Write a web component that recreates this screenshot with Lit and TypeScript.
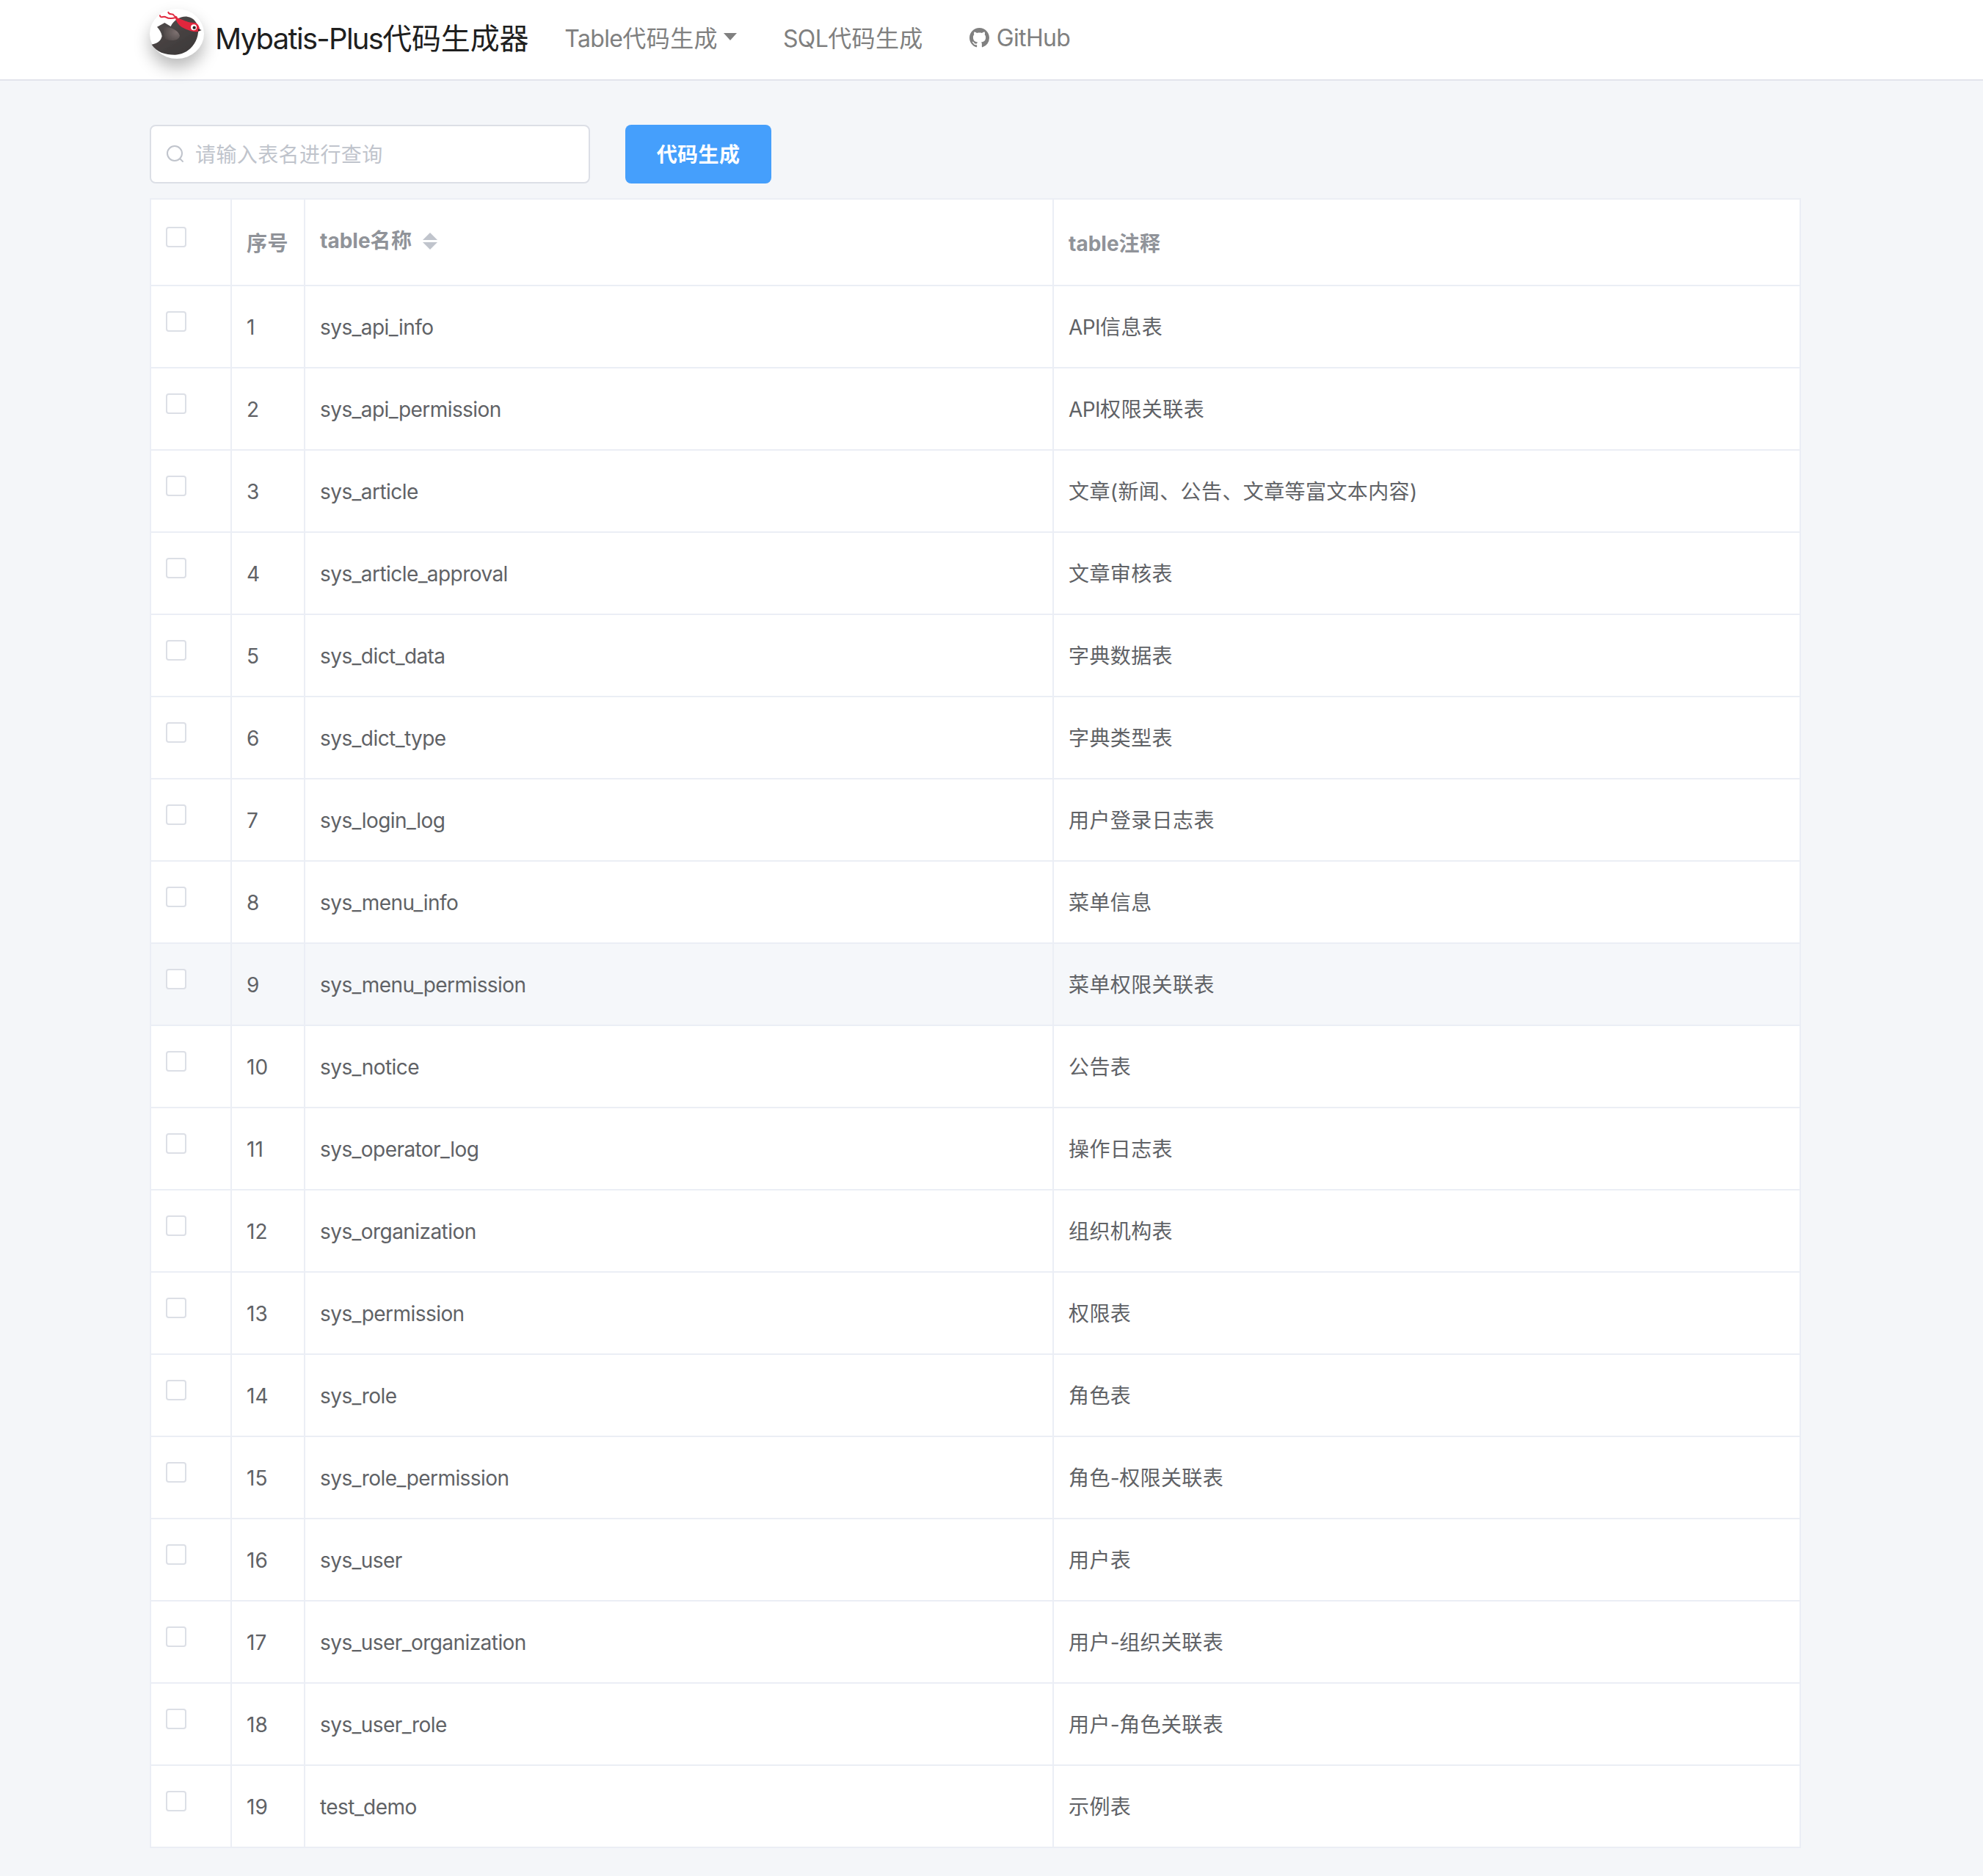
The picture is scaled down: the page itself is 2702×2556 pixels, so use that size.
import { LitElement, html, css, svg } from "lit";
import { customElement } from "lit/decorators.js";

const ROWS: [string, string][] = [
  ["sys_api_info", "API信息表"],
  ["sys_api_permission", "API权限关联表"],
  ["sys_article", "文章(新闻、公告、文章等富文本内容)"],
  ["sys_article_approval", "文章审核表"],
  ["sys_dict_data", "字典数据表"],
  ["sys_dict_type", "字典类型表"],
  ["sys_login_log", "用户登录日志表"],
  ["sys_menu_info", "菜单信息"],
  ["sys_menu_permission", "菜单权限关联表"],
  ["sys_notice", "公告表"],
  ["sys_operator_log", "操作日志表"],
  ["sys_organization", "组织机构表"],
  ["sys_permission", "权限表"],
  ["sys_role", "角色表"],
  ["sys_role_permission", "角色-权限关联表"],
  ["sys_user", "用户表"],
  ["sys_user_organization", "用户-组织关联表"],
  ["sys_user_role", "用户-角色关联表"],
  ["test_demo", "示例表"],
];

/* Latin runs are tracked tighter than CJK runs, as in the reference's system font. */
const runs = (text: string) =>
  text
    .split(/([A-Za-z_\-]+)/)
    .filter((s) => s)
    .map((s) =>
      /^[A-Za-z_\-]+$/.test(s) ? html`<span class="lat">${s}</span>` : html`<span>${s}</span>`
    );

const logo = svg`
  <svg class="logo-svg" viewBox="42 40 222 200" xmlns="http://www.w3.org/2000/svg">
    <defs>
      <linearGradient id="body" x1="0" y1="0" x2="0.7" y2="1">
        <stop offset="0" stop-color="#524c4c"/>
        <stop offset="1" stop-color="#3d3939"/>
      </linearGradient>
      <radialGradient id="wing" cx="0.8" cy="0.4" r="0.9">
        <stop offset="0" stop-color="#7d7170"/>
        <stop offset="1" stop-color="#4a4444"/>
      </radialGradient>
      <filter id="soft"><feGaussianBlur stdDeviation="1"/></filter>
    </defs>
    <g filter="url(#soft)">
      <path fill="url(#body)" d="M72 112 L103 95 L128 110 C140 85 165 68 195 70 C225 74 243 100 240 135 C235 185 195 225 145 226 C105 226 70 215 50 184 C72 180 88 170 92 150 C90 135 82 122 72 112 Z"/>
      <path fill="url(#wing)" d="M97 112 C120 108 160 125 165 148 C160 170 125 172 105 160 C100 145 100 128 97 112 Z"/>
      <path fill="#e0283c" d="M146 72 C170 80 200 96 226 95 C240 97 246 112 247 127 C232 138 200 128 172 112 C160 104 150 90 146 72 Z"/>
      <path fill="none" stroke="#e0283c" stroke-width="6" stroke-linecap="round" stroke-linejoin="round" d="M84 66 C86 78 100 66 108 72 C118 78 134 78 148 74"/>
      <path fill="none" stroke="#e0283c" stroke-width="6" stroke-linecap="round" stroke-linejoin="round" d="M118 52 C122 66 136 54 140 64 C143 70 146 70 152 72"/>
      <circle cx="222" cy="114" r="12" fill="#fff"/>
      <circle cx="224" cy="115" r="6.5" fill="#2f2b2b"/>
      <path fill="#2f2b2b" d="M240 120 L254 125 L240 130 Z"/>
    </g>
  </svg>`;

const github = svg`
  <svg class="gh" viewBox="0 0 16 16" xmlns="http://www.w3.org/2000/svg">
    <path fill="currentColor" d="M8 0C3.58 0 0 3.58 0 8c0 3.54 2.29 6.53 5.47 7.59.4.07.55-.17.55-.38 0-.19-.01-.82-.01-1.49-2.01.37-2.53-.49-2.69-.94-.09-.23-.48-.94-.82-1.13-.28-.15-.68-.52-.01-.53.63-.01 1.08.58 1.23.82.72 1.21 1.87.87 2.33.66.07-.52.28-.87.51-1.07-1.78-.2-3.64-.89-3.64-3.95 0-.87.31-1.59.82-2.15-.08-.2-.36-1.02.08-2.12 0 0 .67-.21 2.2.82.64-.18 1.32-.27 2-.27.68 0 1.36.09 2 .27 1.53-1.04 2.2-.82 2.2-.82.44 1.1.16 1.92.08 2.12.51.56.82 1.27.82 2.15 0 3.07-1.87 3.75-3.65 3.95.29.25.54.73.54 1.48 0 1.07-.01 1.93-.01 2.2 0 .21.15.46.55.38A8.013 8.013 0 0016 8c0-4.42-3.58-8-8-8z"/>
  </svg>`;

@customElement("app-root")
export class AppRoot extends LitElement {
  static styles = css`
    :host {
      display: block;
      height: 2556px;
      overflow: hidden;
      background: #f4f6f9;
      font-family: Inter, "Noto Sans CJK SC", sans-serif;
      color: #606266;
      letter-spacing: 0.4px;
    }
    .lat {
      letter-spacing: -0.02em;
    }
    .navbar {
      box-sizing: border-box;
      height: 110px;
      background: #fff;
      border-bottom: 2px solid #e2e4ec;
      padding: 0 204px 4px;
      display: flex;
      align-items: center;
    }
    .logo {
      width: 74px;
      height: 68px;
      margin-top: -12px;
      border-radius: 50%;
      background: #fff;
      box-shadow: 0 12px 22px rgba(0, 0, 0, 0.28);
      flex: none;
      display: flex;
    }
    .logo-svg {
      width: 74px;
      height: 68px;
    }
    .brand {
      margin: 0 0 4px 15px;
      font-size: 40px;
      letter-spacing: -0.2px;
      color: rgba(0, 0, 0, 0.9);
      white-space: nowrap;
    }
    .brand .lat {
      letter-spacing: -1.7px;
    }
    .nav {
      display: flex;
      align-items: center;
      gap: 63px;
      margin: 0 0 5px 49px;
      font-size: 32px;
      color: #808080;
      white-space: nowrap;
    }
    .nav-item {
      display: flex;
      align-items: center;
    }
    .nav-item.github {
      margin-top: 4px;
    }
    .caret {
      margin-left: 8px;
      border-top: 10px solid #808080;
      border-left: 9px solid transparent;
      border-right: 9px solid transparent;
    }
    .gh {
      width: 27px;
      height: 27px;
      margin-right: 10px;
    }
    main {
      padding: 60px 248px 0 204px;
    }
    .toolbar {
      display: flex;
      gap: 48px;
      height: 80px;
      margin-bottom: 20px;
    }
    .search {
      box-sizing: border-box;
      width: 600px;
      height: 80px;
      border: 2px solid #dcdfe6;
      border-radius: 8px;
      background: #fff;
      display: flex;
      align-items: center;
      padding-left: 20px;
      gap: 14px;
      font-size: 28px;
      color: #c0c4cc;
    }
    .search span {
      margin-bottom: 3px;
    }
    .search svg {
      width: 26px;
      height: 26px;
      flex: none;
    }
    .btn {
      box-sizing: border-box;
      width: 199px;
      height: 80px;
      padding-bottom: 3px;
      border-radius: 8px;
      background: #459ffc;
      color: #fff;
      font-size: 28px;
      font-weight: 600;
      display: flex;
      align-items: center;
      justify-content: center;
    }
    table {
      width: 2250px;
      table-layout: fixed;
      border-collapse: separate;
      border-spacing: 0;
      background: #fff;
      border-top: 2px solid #ebeef5;
      border-left: 2px solid #ebeef5;
      font-size: 28px;
    }
    col.c1 { width: 110px; }
    col.c2 { width: 100px; }
    col.c3 { width: 1020px; }
    th, td {
      box-sizing: border-box;
      padding: 0 20px;
      border-right: 2px solid #ebeef5;
      border-bottom: 2px solid #ebeef5;
      text-align: left;
      vertical-align: top;
      white-space: nowrap;
    }
    th {
      height: 118px;
      color: #909399;
      font-weight: 700;
    }
    th .lat {
      letter-spacing: 0;
    }
    td {
      height: 112px;
      padding-top: 36px;
      line-height: 40px;
      font-weight: 400;
    }
    tr.hover td {
      background: #f5f7fa;
    }
    th.idx, td.idx {
      padding-left: 20px;
      padding-right: 0;
    }
    td.idx {
      letter-spacing: 0.2px;
    }
    th.idx, th.note {
      padding-top: 40px;
      line-height: 40px;
    }
    th.name {
      padding-top: 36px;
      line-height: 40px;
    }
    .name-wrap {
      display: flex;
      align-items: center;
    }
    .sort {
      margin-left: 15px;
      display: flex;
      flex-direction: column;
      gap: 3px;
    }
    .sort i {
      display: block;
      border-left: 10px solid transparent;
      border-right: 10px solid transparent;
    }
    .sort i.up { border-bottom: 10px solid #c0c4cc; }
    .sort i.down { border-top: 10px solid #c0c4cc; }
    th.check { padding-top: 37px; padding-left: 20px; padding-right: 0; }
    td.check { padding-top: 34px; padding-left: 20px; padding-right: 0; }
    .box {
      box-sizing: border-box;
      display: block;
      width: 28px;
      height: 28px;
      border: 2px solid #dcdfe6;
      border-radius: 4px;
      background: #fff;
    }
  `;

  render() {
    return html`
      <header class="navbar">
        <div class="logo">${logo}</div>
        <div class="brand">${runs("Mybatis-Plus代码生成器")}</div>
        <nav class="nav">
          <span class="nav-item"><span>${runs("Table代码生成")}</span><i class="caret"></i></span>
          <span class="nav-item"><span>${runs("SQL代码生成")}</span></span>
          <span class="nav-item github">${github}<span class="lat">GitHub</span></span>
        </nav>
      </header>
      <main>
        <div class="toolbar">
          <div class="search">
            <svg viewBox="0 0 26 26" fill="none" stroke="#c0c4cc" stroke-width="2" stroke-linecap="round">
              <circle cx="12" cy="12" r="10"/>
              <path d="M19.5 19.5 L23 23"/>
            </svg>
            <span>请输入表名进行查询</span>
          </div>
          <div class="btn">代码生成</div>
        </div>
        <table>
          <colgroup>
            <col class="c1"/><col class="c2"/><col class="c3"/><col/>
          </colgroup>
          <thead>
            <tr>
              <th class="check"><span class="box"></span></th>
              <th class="idx">序号</th>
              <th class="name">
                <div class="name-wrap"><span>${runs("table名称")}</span>
                  <span class="sort"><i class="up"></i><i class="down"></i></span>
                </div>
              </th>
              <th class="note">${runs("table注释")}</th>
            </tr>
          </thead>
          <tbody>
            ${ROWS.map(
              ([name, note], i) => html`
                <tr class=${i === 8 ? "hover" : ""}>
                  <td class="check"><span class="box"></span></td>
                  <td class="idx">${i + 1}</td>
                  <td><span class="lat">${name}</span></td>
                  <td>${runs(note)}</td>
                </tr>
              `
            )}
          </tbody>
        </table>
      </main>
    `;
  }
}
